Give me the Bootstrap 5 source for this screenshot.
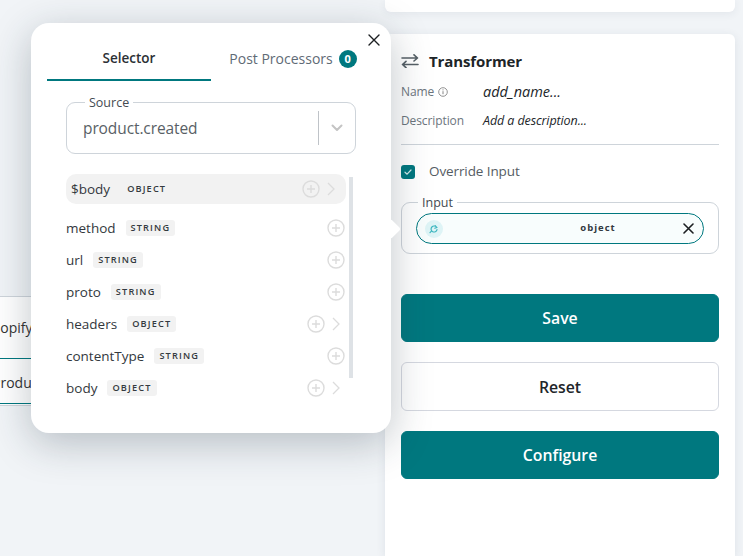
<!DOCTYPE html>
<html lang="en">
<head>
<meta charset="utf-8">
<title>Transformer</title>
<link href="https://cdn.jsdelivr.net/npm/bootstrap@5.3.0/dist/css/bootstrap.min.css" rel="stylesheet">
<style>
html,body{height:556px;overflow:hidden}
body{background:#f1f4f7;font-family:"Open Sans","Noto Sans",sans-serif;color:#212529;position:relative;font-size:14px}
.side-col{width:350px;margin-left:385px;height:556px}
.top-stub{height:12px;background:#fff;border-radius:0 0 6px 6px;box-shadow:0 2px 8px rgba(40,60,90,.07);margin-bottom:22px}
.tf-panel{background:#fff;border-radius:6px 6px 0 0;box-shadow:0 2px 10px rgba(40,60,90,.1);height:522px;padding:17px 16px 0}
.tf-title{font-size:15px;font-weight:700;color:#1d2528;height:20px;letter-spacing:-.1px;gap:10px;margin-bottom:7px}
.meta-row{font-size:12px;color:#6c757d;height:28px}
.meta-row.wide{height:30px}
.meta-label{width:82px;flex:none;letter-spacing:-.1px}
.meta-val{font-style:italic;color:#212529;font-size:12.5px;letter-spacing:-.1px}
.meta-val.big{font-size:14.5px;letter-spacing:0}
.tf-rule{border-top:1px solid #ced4da;opacity:1;margin:8px 0 0}
.over-row{margin-top:13px;height:27px;font-size:13.5px;color:#555c63;gap:14px;letter-spacing:-.1px}
.tick-box{width:14px;height:14px;background:#00787f;border-radius:3px;flex:none}
.legend-box{border:1px solid #ced4da;border-radius:9px;position:relative}
.legend-txt{position:absolute;top:-8px;background:#fff;padding:0 4px;line-height:16px;font-size:13px;color:#444b52}
.in-box{height:52px;margin-top:17px;padding:10px 14px}
.in-box .legend-txt{left:16px;font-size:12.5px}
.in-pill{height:31px;border:1px solid #00787f;border-radius:16px;background:#f8fdfd;padding:0 9px 0 8px}
.pill-ico{width:18px;height:18px;border-radius:50%;background:#def4f6;flex:none}
.pill-txt{font-size:9.5px;font-weight:700;letter-spacing:1px;color:#33393f;flex:1;text-align:center;padding-left:70px}
.act-btn{height:48px;width:100%;font-size:15.8px;font-weight:600;border-radius:6px;display:flex;align-items:center;justify-content:center;padding-top:8px}
.act-teal{background:#00787f;border-color:#00787f;color:#fff}
.act-line{background:#fff;border-color:#d5d8e0;color:#212529;height:49px}
.act-one{margin-top:40px}
.act-two{margin-top:20px}
.flow-node{position:absolute;left:0;top:296px;width:60px;height:110px;background:#fff;border:1px solid #ced4da;border-left:0;font-size:14px;color:#333}
.node-a{height:62px;border-bottom:1px solid #00787f;padding-top:20px;white-space:nowrap;text-indent:-16px}
.node-b{height:45px;border-bottom:1px solid #00787f;padding-top:13px;white-space:nowrap;text-indent:-8px}
.pop-over{position:absolute;left:31px;top:23px;width:360px;height:410px;background:#fff;border-radius:18px;box-shadow:0 10px 40px rgba(30,45,60,.28);padding:16px 16px 0;z-index:5}
.pop-arrow{position:absolute;left:353px;top:199px;width:14px;height:14px;background:#fff;transform:rotate(45deg);border-radius:2px}
.pop-close{position:absolute;left:336px;top:10px;width:14px;height:14px;background:none;border:0;padding:0;display:block}
.pop-tabs{height:42px}
.pop-tab{width:164px;height:42px;font-size:14px;color:#5f6b76;gap:6px;padding-bottom:3px}
.pop-tab.on{color:#2b3035;font-weight:600;font-size:13.5px;border-bottom:2px solid #00787f;padding-bottom:1px}
.count-dot{width:18px;height:18px;border-radius:50%;background:#00787f;color:#fff;font-size:11px;font-weight:700;line-height:18px;text-align:center}
.src-box{margin:21px 0 0 19px;width:290px;height:52px;padding:0 0 0 16px}
.src-box .legend-txt{left:18px;font-size:12.5px}
.src-val{font-size:15.5px;color:#595f66;flex:1;letter-spacing:-.1px;padding-top:2px}
.src-sep{width:1px;height:34px;background:#bfc3c8}
.src-caret{width:36px;flex:none;text-align:center;line-height:0}
.tree-wrap{position:relative;margin:20px 0 0 19px;width:287px}
.tree-bar{position:absolute;left:283px;top:3px;width:4px;height:201px;background:#dee2e6}
.tree-row{height:32px;width:280px;font-size:13.5px;color:#33383d;gap:10px;padding-right:1px}
.tree-row.hot{height:30px;background:#f2f2f2;border-radius:10px;padding:0 6px 0 5px;margin-bottom:8px;gap:17px}
.type-tag{height:16px;line-height:16px;padding:0 5px;background:#f2f2f2;border-radius:3px;font-size:9.2px;font-weight:600;letter-spacing:1.15px;color:#343a40}
.hot .type-tag{background:none;padding:0}
.row-ctl{margin-left:auto;gap:6px}
.chev-slot{width:14px;flex:none}
</style>
</head>
<body>
<div class="flow-node">
  <div class="node-a">Shopify</div>
  <div class="node-b">Produ</div>
</div>
<main class="side-col">
  <div class="top-stub"></div>
  <section class="tf-panel">
    <div class="tf-title d-flex align-items-center">
      <svg width="18" height="14" viewBox="0 0 18 14" fill="none" stroke="#555f66" stroke-width="1.6" stroke-linecap="round" stroke-linejoin="round"><path d="M1 4h15.5M13 .8l3.5 3.2L13 7"/><path d="M17 10.5H1.5M5 7.3l-3.5 3.2L5 13.7"/></svg>
      <span>Transformer</span>
    </div>
    <div class="meta-row d-flex align-items-center">
      <div class="meta-label d-flex align-items-center gap-1">Name
        <svg width="10" height="10" viewBox="0 0 10 10" fill="none" stroke="#777"><circle cx="5" cy="5" r="4.3" stroke-width=".8"/><path d="M5 4.2v3M5 2.4v1" stroke-width=".9"/></svg>
      </div>
      <div class="meta-val big">add_name...</div>
    </div>
    <div class="meta-row wide d-flex align-items-center">
      <div class="meta-label">Description</div>
      <div class="meta-val">Add a description...</div>
    </div>
    <hr class="tf-rule">
    <div class="over-row d-flex align-items-center">
      <span class="tick-box d-flex align-items-center justify-content-center">
        <svg width="10" height="10" viewBox="0 0 10 10" fill="none" stroke="#cfe9ea" stroke-width="1.2" stroke-linecap="round" stroke-linejoin="round"><path d="M2 5.2l2.1 2L8 3"/></svg>
      </span>
      <span>Override Input</span>
    </div>
    <div class="legend-box in-box">
      <span class="legend-txt">Input</span>
      <div class="in-pill d-flex align-items-center">
        <span class="pill-ico d-flex align-items-center justify-content-center">
          <svg width="10" height="10" viewBox="0 0 10 10" fill="none" stroke="#3db7c0" stroke-width="1.2" stroke-linecap="round"><path d="M7.6 3.4A3 3 0 1 0 8 5.6M6.2 1.6l1.6 1.8-2 .8M1 8.6l1.4-1.4"/></svg>
        </span>
        <span class="pill-txt">object</span>
        <svg width="11" height="11" viewBox="0 0 11 11" stroke="#1c1f22" stroke-width="1.6" stroke-linecap="round"><path d="M1 1l9 9M10 1l-9 9"/></svg>
      </div>
    </div>
    <button type="button" class="btn act-btn act-teal act-one">Save</button>
    <button type="button" class="btn act-btn act-line act-two">Reset</button>
    <button type="button" class="btn act-btn act-teal act-two">Configure</button>
  </section>
</main>

<aside class="pop-over">
  <span class="pop-arrow"></span>
  <button type="button" class="pop-close" aria-label="Close">
    <svg class="d-block" width="14" height="14" viewBox="0 0 14 14" stroke="#1c1f22" stroke-width="1.4" stroke-linecap="round"><path d="M2 2l10 10M12 2L2 12"/></svg>
  </button>
  <div class="pop-tabs d-flex">
    <div class="pop-tab on d-flex align-items-center justify-content-center">Selector</div>
    <div class="pop-tab d-flex align-items-center justify-content-center">Post Processors <span class="count-dot">0</span></div>
  </div>
  <div class="legend-box src-box d-flex align-items-center">
    <span class="legend-txt">Source</span>
    <span class="src-val">product.created</span>
    <span class="src-sep"></span>
    <span class="src-caret"><svg width="12" height="8" viewBox="0 0 12 8" fill="none" stroke="#c4c4c4" stroke-width="2" stroke-linecap="round" stroke-linejoin="round"><path d="M1.5 1.5L6 6l4.5-4.5"/></svg></span>
  </div>
  <div class="tree-wrap">
    <span class="tree-bar"></span>
    <div class="tree-row hot d-flex align-items-center"><span>$body</span><span class="type-tag">OBJECT</span><span class="row-ctl d-flex align-items-center"><svg width="18" height="18" viewBox="0 0 18 18" fill="none" stroke="#dcdcdc" stroke-width="1.4"><circle cx="9" cy="9" r="8"/><path d="M9 5v8M5 9h8"/></svg><svg class="chev-slot" width="8" height="14" viewBox="0 0 14 14" fill="none" stroke="#dcdcdc" stroke-width="1.3"><path d="M2 1l6 6-6 6"/></svg></span></div>
    <div class="tree-row d-flex align-items-center"><span>method</span><span class="type-tag">STRING</span><span class="row-ctl d-flex"><svg width="18" height="18" viewBox="0 0 18 18" fill="none" stroke="#dcdcdc" stroke-width="1.4"><circle cx="9" cy="9" r="8"/><path d="M9 5v8M5 9h8"/></svg></span></div>
    <div class="tree-row d-flex align-items-center"><span>url</span><span class="type-tag">STRING</span><span class="row-ctl d-flex"><svg width="18" height="18" viewBox="0 0 18 18" fill="none" stroke="#dcdcdc" stroke-width="1.4"><circle cx="9" cy="9" r="8"/><path d="M9 5v8M5 9h8"/></svg></span></div>
    <div class="tree-row d-flex align-items-center"><span>proto</span><span class="type-tag">STRING</span><span class="row-ctl d-flex"><svg width="18" height="18" viewBox="0 0 18 18" fill="none" stroke="#dcdcdc" stroke-width="1.4"><circle cx="9" cy="9" r="8"/><path d="M9 5v8M5 9h8"/></svg></span></div>
    <div class="tree-row d-flex align-items-center"><span>headers</span><span class="type-tag">OBJECT</span><span class="row-ctl d-flex align-items-center"><svg width="18" height="18" viewBox="0 0 18 18" fill="none" stroke="#dcdcdc" stroke-width="1.4"><circle cx="9" cy="9" r="8"/><path d="M9 5v8M5 9h8"/></svg><svg class="chev-slot" width="8" height="14" viewBox="0 0 14 14" fill="none" stroke="#dcdcdc" stroke-width="1.3"><path d="M2 1l6 6-6 6"/></svg></span></div>
    <div class="tree-row d-flex align-items-center"><span>contentType</span><span class="type-tag">STRING</span><span class="row-ctl d-flex"><svg width="18" height="18" viewBox="0 0 18 18" fill="none" stroke="#dcdcdc" stroke-width="1.4"><circle cx="9" cy="9" r="8"/><path d="M9 5v8M5 9h8"/></svg></span></div>
    <div class="tree-row d-flex align-items-center"><span>body</span><span class="type-tag">OBJECT</span><span class="row-ctl d-flex align-items-center"><svg width="18" height="18" viewBox="0 0 18 18" fill="none" stroke="#dcdcdc" stroke-width="1.4"><circle cx="9" cy="9" r="8"/><path d="M9 5v8M5 9h8"/></svg><svg class="chev-slot" width="8" height="14" viewBox="0 0 14 14" fill="none" stroke="#dcdcdc" stroke-width="1.3"><path d="M2 1l6 6-6 6"/></svg></span></div>
  </div>
</aside>
<script src="https://cdn.jsdelivr.net/npm/bootstrap@5.3.0/dist/js/bootstrap.bundle.min.js"></script>
</body>
</html>
